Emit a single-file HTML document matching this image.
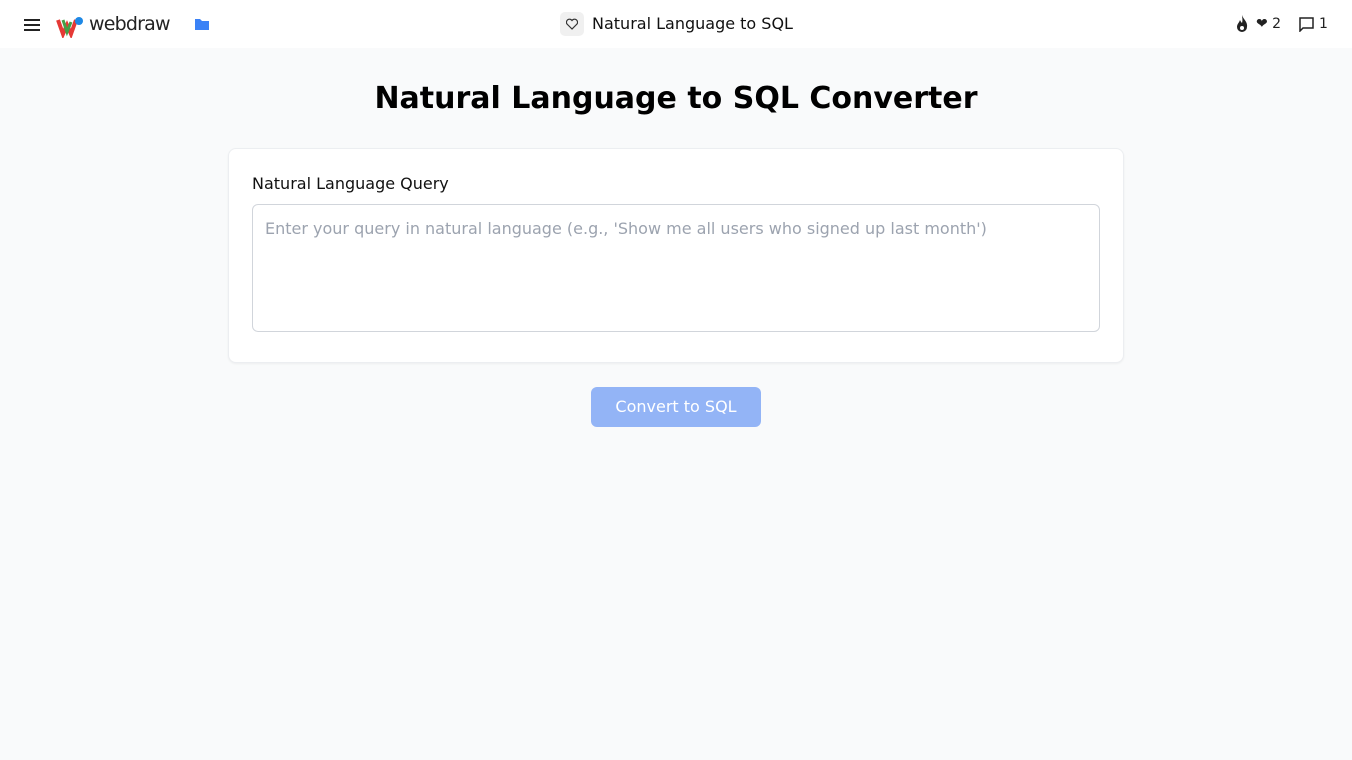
<!DOCTYPE html>
<html><head><meta charset="utf-8"><style>
*{box-sizing:border-box;margin:0;padding:0}
body{width:1352px;height:760px;background:#f9fafb;font-family:"DejaVu Sans","Liberation Sans",sans-serif;overflow:hidden;position:relative}
.hdr{position:absolute;left:0;top:0;width:1352px;height:48px;background:#fff}
.t{position:absolute;white-space:nowrap}
</style></head><body>
<div class="hdr">
 <svg class="t" style="left:24px;top:19px" width="16" height="12"><path d="M0 1h16M0 6h16M0 11h16" stroke="#222" stroke-width="2"/></svg>
 <svg class="t" style="left:55px;top:14px" width="30" height="24"><path d="M3 6l5 14 4-9 4 9 5-14" stroke="#e53935" stroke-width="4" fill="none"/><path d="M8 6l4 12 4-10" stroke="#43a047" stroke-width="3" fill="none"/><circle cx="24" cy="7" r="4" fill="#1e88e5"/></svg>
 <div class="t" style="left:89px;top:13px;font-size:19px;color:#222;letter-spacing:-0.8px;font-weight:500">webdraw</div>
 <svg class="t" style="left:195px;top:18px" width="14" height="12"><path d="M0 1h5l2 2h7v9H0z" fill="#3b82f6"/></svg>
 <div class="t" style="left:560px;top:12px;width:24px;height:24px;background:#f0f0f0;border-radius:5px"></div>
 <svg class="t" style="left:566px;top:18px" width="12" height="12"><path d="M6 11L1 6a2.8 2.8 0 015-3.5A2.8 2.8 0 0111 6z" fill="none" stroke="#333" stroke-width="1.2"/></svg>
 <div class="t" style="left:592px;top:14px;font-size:16px;color:#111">Natural Language to SQL</div>
 <svg class="t" style="left:1236px;top:15px" width="12" height="17"><path d="M6 0C7 4 12 7 11 12a5 5 0 01-10 0C1 9 3 8 4 5c1 2 2 3 2 3C7 5 6 2 6 0z" fill="#222"/><circle cx="6" cy="13" r="2" fill="#fff"/></svg>
 <div class="t" style="left:1256px;top:16px;font-size:14px;color:#222">❤ 2</div>
 <svg class="t" style="left:1299px;top:17px" width="16" height="15"><path d="M1 1h13v10H4l-3 3z" fill="none" stroke="#222" stroke-width="1.5"/></svg>
 <div class="t" style="left:1319px;top:16px;font-size:14px;color:#222">1</div>
</div>
<div class="t" style="left:0;width:1352px;text-align:center;top:81px;font-size:30px;font-weight:bold;color:#000">Natural Language to SQL Converter</div>
<div class="t" style="left:228px;top:148px;width:896px;height:215px;background:#fff;border:1px solid #eceef1;border-radius:8px;box-shadow:0 1px 2px rgba(0,0,0,.05)"></div>
<div class="t" style="left:252px;top:174px;font-size:16px;color:#111">Natural Language Query</div>
<div class="t" style="left:252px;top:204px;width:848px;height:128px;border:1px solid #d1d5db;border-radius:6px;background:#fff"></div>
<div class="t" style="left:265px;top:219px;font-size:16px;color:#9ca3af">Enter your query in natural language (e.g., 'Show me all users who signed up last month')</div>
<div class="t" style="left:591px;top:387px;width:170px;height:40px;background:#93b4f6;border-radius:6px;color:#fff;font-size:16px;text-align:center;line-height:40px">Convert to SQL</div>
</body></html>
